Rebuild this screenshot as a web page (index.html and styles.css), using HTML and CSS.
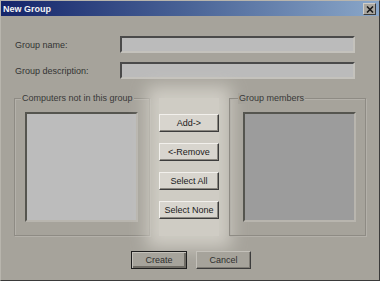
FILE: index.html
```html
<!DOCTYPE html>
<html lang="en">
<head>
  <meta charset="UTF-8">
  <title>New Group</title>
  <link rel="stylesheet" href="styles.css">
</head>
<body>
  <div class="window">
    <div class="titlebar">
      <span class="title">New Group</span>
      <span class="close">
        <svg width="8" height="7" viewBox="0 0 8 7"><path d="M1 0.5 L7 6.5 M7 0.5 L1 6.5" stroke="#1a1a1a" stroke-width="1.6"/></svg>
      </span>
    </div>

    <div class="content">
      <div class="field">
        <label>Group name:</label>
        <div class="input"></div>
      </div>
      <div class="field">
        <label>Group description:</label>
        <div class="input"></div>
      </div>

      <div class="groups">
        <div class="group left">
          <span class="caption">Computers not in this group</span>
          <div class="listbox"></div>
        </div>

        <div class="actions">
          <button>Add-&gt;</button>
          <button>&lt;-Remove</button>
          <button>Select All</button>
          <button>Select None</button>
        </div>

        <div class="group right">
          <span class="caption">Group members</span>
          <div class="listbox dark"></div>
        </div>
      </div>

      <div class="footer">
        <button class="default">Create</button>
        <button>Cancel</button>
      </div>
    </div>
  </div>
</body>
</html>
```

FILE: styles.css
```css
body {
  margin: 0;
  background: #a6a39b;
  font-family: "Liberation Sans", Arial, sans-serif;
  font-size: 9px;
  color: #2a2a2a;
}

.window {
  width: 380px;
  height: 281px;
  box-sizing: border-box;
  border: 1px solid;
  border-color: #b8b5ad #3a3a3a #3a3a3a #b8b5ad;
  background: #a6a39b;
  overflow: hidden;
}

.titlebar {
  height: 15px;
  display: flex;
  align-items: center;
  justify-content: space-between;
  padding: 0 3px 0 2px;
  background: linear-gradient(to right, #14246a, #4a6497 50%, #8aa7c9);
}

.title {
  color: #f4f4f4;
  font-weight: bold;
  font-size: 9px;
}

.close {
  width: 11px;
  height: 10px;
  display: flex;
  align-items: center;
  justify-content: center;
  background: #a9a69f;
  border: 1px solid;
  border-color: #d0cdc6 #3c3c3c #3c3c3c #d0cdc6;
  margin-top: 1px;
}

.content {
  padding: 20px 0 0 13px;
}

.field {
  display: flex;
  align-items: center;
  height: 17px;
  margin-bottom: 9px;
}

.field label {
  width: 105px;
  padding-left: 1px;
  color: #333;
}

.input {
  width: 231px;
  height: 13px;
  background: #bbbbbb;
  border-style: solid;
  border-width: 2px;
  border-color: #4a4a4a #c4c2bc #c4c2bc #4a4a4a;
}

.groups {
  display: flex;
  margin-top: 19px;
  height: 138px;
}

.group {
  box-sizing: border-box;
  height: 138px;
  border: 1px solid #8e8b84;
  box-shadow: inset 1px 1px #b4b1aa, 1px 1px #b4b1aa;
}

.group.left {
  width: 136px;
  padding-left: 10px;
}

.group.right {
  width: 137px;
  padding-left: 13px;
  margin-left: 10px;
}

.caption {
  display: inline-block;
  margin: -6px 0 0 -4px;
  padding: 0 1px;
  background: #a6a39b;
  color: #383838;
  line-height: 11px;
  vertical-align: top;
}

.group.right .caption {
  margin-left: -5px;
}

.listbox {
  width: 109px;
  height: 106px;
  margin-top: 3px;
  background: #bcbcbc;
  border-style: solid;
  border-width: 2px;
  border-color: #55554f #b8b5ae #b8b5ae #55554f;
}

.listbox.dark {
  background: #9c9c9c;
}

.actions {
  width: 60px;
  margin-left: 9px;
  padding-top: 16px;
  display: flex;
  flex-direction: column;
  gap: 11px;
  background: #cfccc4;
  box-shadow: 0 0 16px 12px #cfccc4;
}

button {
  font-family: "Liberation Sans", Arial, sans-serif;
  font-size: 9px;
  color: #1a1a1a;
  height: 18px;
  padding: 0;
  background: #d8d5ce;
  border: 1px solid;
  border-color: #f2f0ec #3c3c3c #3c3c3c #f2f0ec;
  box-shadow: inset -1px -1px #8a8780;
}

.footer {
  display: flex;
  justify-content: center;
  gap: 9px;
  margin: 15px 0 0 -11px;
}

.footer button {
  width: 55px;
  background: #a6a39b;
  color: #2e2e2e;
  border-color: #c4c1ba #3c3c3c #3c3c3c #c4c1ba;
  box-shadow: inset -1px -1px #7e7b74;
}

.footer .default {
  width: 56px;
  border: 1px solid #1e1e1e;
  box-shadow: inset 1px 1px #c4c1ba, inset -2px -2px #6e6b64;
}
```
